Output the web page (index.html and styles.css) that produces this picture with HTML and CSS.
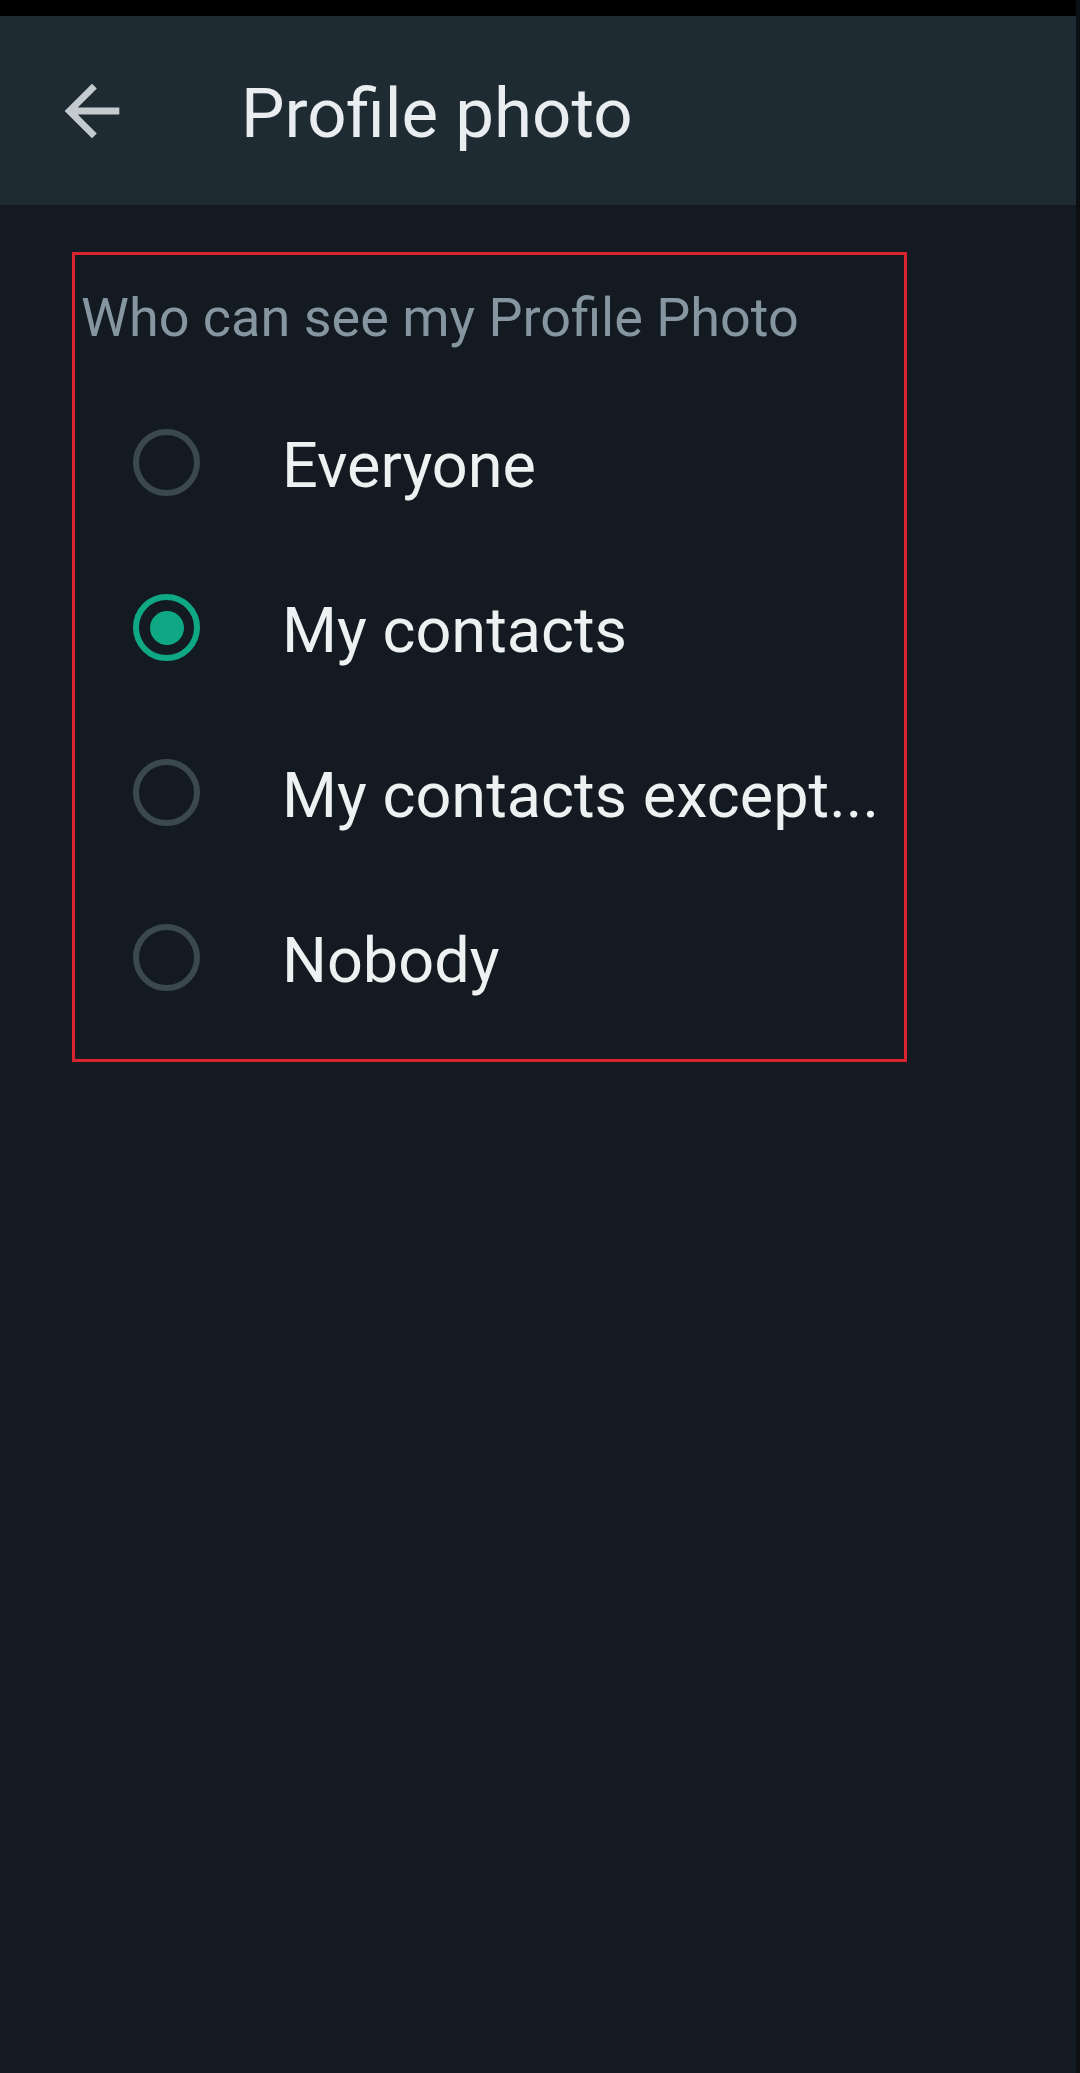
FILE: index.html
```html
<!DOCTYPE html>
<html lang="en">
<head>
  <meta charset="UTF-8">
  <meta name="viewport" content="width=device-width, initial-scale=1.0">
  <title>Profile photo</title>
  <link rel="stylesheet" href="styles.css">
</head>
<body>
  <div class="status-bar"></div>

  <header class="app-bar">
    <button class="back-btn" aria-label="Back">
      <svg viewBox="0 0 24 24" width="82" height="82">
        <path d="M20 11H7.83l5.59-5.59L12 4l-8 8 8 8 1.41-1.41L7.83 13H20v-2z" fill="currentColor"/>
      </svg>
    </button>
    <h1 class="title">Profile photo</h1>
  </header>

  <main class="content">
    <section class="privacy-box">
      <p class="section-label">Who can see my Profile Photo</p>

      <label class="option">
        <span class="radio"></span>
        <span class="option-text">Everyone</span>
      </label>
      <label class="option">
        <span class="radio checked"></span>
        <span class="option-text">My contacts</span>
      </label>
      <label class="option">
        <span class="radio"></span>
        <span class="option-text">My contacts except...</span>
      </label>
      <label class="option">
        <span class="radio"></span>
        <span class="option-text">Nobody</span>
      </label>
    </section>
  </main>
</body>
</html>
```

FILE: styles.css
```css
html, body {
  margin: 0;
  padding: 0;
}
body {
  min-height: 2073px;
  background: #141a21;
  font-family: Roboto, "Noto Sans", Arial, sans-serif;
  border-right: 4px solid #0c1014;
  box-sizing: border-box;
}
.status-bar {
  height: 16px;
  background: #000;
}
.app-bar {
  height: 189px;
  background: #1f2b32;
  display: flex;
  align-items: center;
  padding-left: 51px;
}
.back-btn {
  width: 82px;
  height: 82px;
  padding: 0;
  border: none;
  background: none;
  color: #c4cbcf;
  display: flex;
}
.title {
  margin: 6px 0 0 108px;
  font-size: 69px;
  font-weight: 400;
  color: #e9edef;
  line-height: 1;
}
.content {
  padding: 47px 0 0 72px;
}
.privacy-box {
  width: 835px;
  height: 810px;
  box-sizing: border-box;
  border: 3px solid #d9232e;
  padding: 31px 0 0 6px;
}
.section-label {
  margin: 0 0 30px;
  font-size: 54px;
  line-height: 64px;
  color: #8696a0;
}
.option {
  height: 165px;
  display: flex;
  align-items: center;
  padding-left: 52px;
}
.radio {
  width: 67px;
  height: 67px;
  box-sizing: border-box;
  border: 6px solid #3b4850;
  border-radius: 50%;
  display: flex;
  align-items: center;
  justify-content: center;
  flex-shrink: 0;
}
.radio.checked {
  border-color: #0fa884;
}
.radio.checked::after {
  content: "";
  width: 34px;
  height: 34px;
  border-radius: 50%;
  background: #0fa884;
}
.option-text {
  margin: 6px 0 0 82px;
  font-size: 63px;
  color: #eef1f2;
}
```
